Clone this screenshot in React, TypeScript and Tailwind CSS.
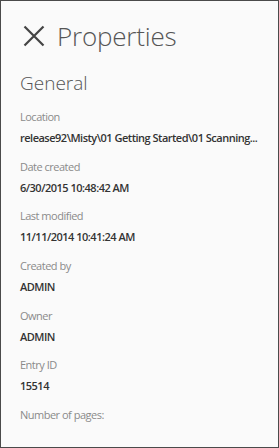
import React from 'react';

const fields = [
  { label: 'Location', value: 'release92\\Misty\\01 Getting Started\\01 Scanning...' },
  { label: 'Date created', value: '6/30/2015 10:48:42 AM' },
  { label: 'Last modified', value: '11/11/2014 10:41:24 AM' },
  { label: 'Created by', value: 'ADMIN' },
  { label: 'Owner', value: 'ADMIN' },
  { label: 'Entry ID', value: '15514' },
  { label: 'Number of pages:', value: '' },
];

export default function App() {
  return (
    <div className="w-[279px] h-[448px] overflow-hidden border border-[#4a4a4a] bg-[#fafafa] font-['Open_Sans',sans-serif]">
      {/* Header */}
      <div className="flex items-center h-[70px] pl-[22px]">
        <svg width="22" height="22" viewBox="0 0 22 22" className="shrink-0">
          <path d="M1.5 1.5 L20.5 20.5 M20.5 1.5 L1.5 20.5" stroke="#444" strokeWidth="2.2" fill="none" />
        </svg>
        <h1 className="ml-[12px] text-[26px] leading-none font-light text-[#555] tracking-[-0.2px]">Properties</h1>
      </div>

      <h2 className="pl-[19px] text-[19px] leading-[24px] font-light text-[#555]">General</h2>

      <div className="pl-[19px] pt-[11px]">
        {fields.map((f) => (
          <div key={f.label} className="h-[49.7px]">
            <div className="text-[11px] leading-[21px] text-[#8a8a8a] font-normal tracking-[-0.5px]">{f.label}</div>
            {f.value && (
              <div className="text-[11px] leading-[21px] text-[#333] font-semibold whitespace-nowrap tracking-[-0.5px]">
                {f.value}
              </div>
            )}
          </div>
        ))}
      </div>
    </div>
  );
}
